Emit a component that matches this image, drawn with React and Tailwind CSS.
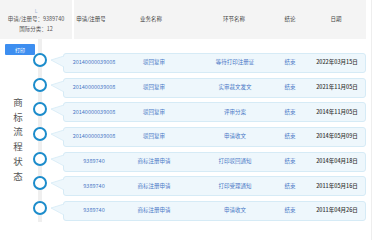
import React from 'react';

const rows = [
  { no: '20140000039008', biz: '驳回复审', step: '等待打印注册证', res: '结束', date: '2022年03月15日' },
  { no: '20140000039008', biz: '驳回复审', step: '实审裁文发文', res: '结束', date: '2021年11月05日' },
  { no: '20140000039008', biz: '驳回复审', step: '评审分案', res: '结束', date: '2014年11月05日' },
  { no: '20140000039008', biz: '驳回复审', step: '申请收文', res: '结束', date: '2014年05月09日' },
  { no: '9389740', biz: '商标注册申请', step: '打印驳回通知', res: '结束', date: '2014年04月18日' },
  { no: '9389740', biz: '商标注册申请', step: '打印受理通知', res: '结束', date: '2011年05月16日' },
  { no: '9389740', biz: '商标注册申请', step: '申请收文', res: '结束', date: '2011年04月26日' },
];

const font = { fontFamily: '"Noto Sans CJK SC", "Noto Sans", sans-serif' };

export default function App() {
  return (
    <div className="relative w-[375px] h-[240px] bg-white overflow-hidden text-[5.5px] leading-none" style={font}>
      {/* 表头 */}
      <div className="flex h-[39px] w-[366px]">
        <div className="w-[72px] bg-[#f4f4f4] flex flex-col items-center pt-[8px] text-[#555]">
          <span className="text-[5px] text-[#9fb8d8] h-[5px]">L</span>
          <span className="mt-[4px]">申请/注册号：9389740</span>
          <span className="mt-[4px]">国际分类：12</span>
        </div>
        <div className="w-[2px] bg-white" />
        <div className="flex-1 bg-[#f4f4f4] grid grid-cols-[34px_86px_80px_32px_60px] items-center text-[#444]">
          <div className="flex justify-center whitespace-nowrap">申请/注册号</div>
          <div className="flex justify-center whitespace-nowrap">业务名称</div>
          <div className="flex justify-center whitespace-nowrap">环节名称</div>
          <div className="flex justify-center whitespace-nowrap">结论</div>
          <div className="flex justify-center whitespace-nowrap">日期</div>
        </div>
      </div>

      {/* 主体 */}
      <div className="flex">
        <div className="w-[33px] shrink-0 flex flex-col">
          <button className="ml-[5px] mt-[5px] w-[30px] h-[11px] bg-[#3d8ef0] text-white text-[5px] rounded-[1px] flex items-center justify-center">
            打印
          </button>
          <div className="mt-[40px] ml-[3px] flex flex-col items-center w-[30px] text-[9.5px] leading-[14.7px] text-[#555]">
            {'商标流程状态'.split('').map((c) => (
              <span key={c}>{c}</span>
            ))}
          </div>
        </div>

        <div className="relative flex-1 pt-[14px] pr-[10px] flex flex-col gap-[4.7px]">
          <div className="absolute left-[5px] top-0 h-[183px] w-[4px] bg-[#efefef]" />
          {rows.map((r, i) => (
            <div key={i} className="relative flex items-start h-[20px]">
              <div className="w-[14px] h-[14px] shrink-0 rounded-full border-[2.2px] border-[#1c8ccb] bg-white" />
              <svg width="17" height="20" viewBox="0 0 17 20" className="shrink-0 -mr-[1px] relative z-10">
                <polygon points="4,7 17,3 17,14" fill="#eef7fc" />
                <polyline points="17,3 4,7 17,14" fill="none" stroke="#d6ebf6" strokeWidth="0.8" />
              </svg>
              <div className="flex-1 h-[20px] bg-[#eef7fc] border border-[#d6ebf6] rounded-[3px] pl-[15px] grid grid-cols-[30px_90px_72px_38px_56px] items-center">
                <div className="flex justify-center whitespace-nowrap text-[#4a78c6]">{r.no}</div>
                <div className="flex justify-center whitespace-nowrap text-[#4a78c6]">{r.biz}</div>
                <div className="flex justify-center whitespace-nowrap text-[#4a78c6]">{r.step}</div>
                <div className="flex justify-center whitespace-nowrap text-[#4a78c6]">{r.res}</div>
                <div className="flex justify-center whitespace-nowrap text-[#333] font-medium">{r.date}</div>
              </div>
            </div>
          ))}
        </div>
      </div>

      <div className="absolute top-0 left-[371px] w-[1px] h-[240px] bg-[#eeeeee]" />
    </div>
  );
}
